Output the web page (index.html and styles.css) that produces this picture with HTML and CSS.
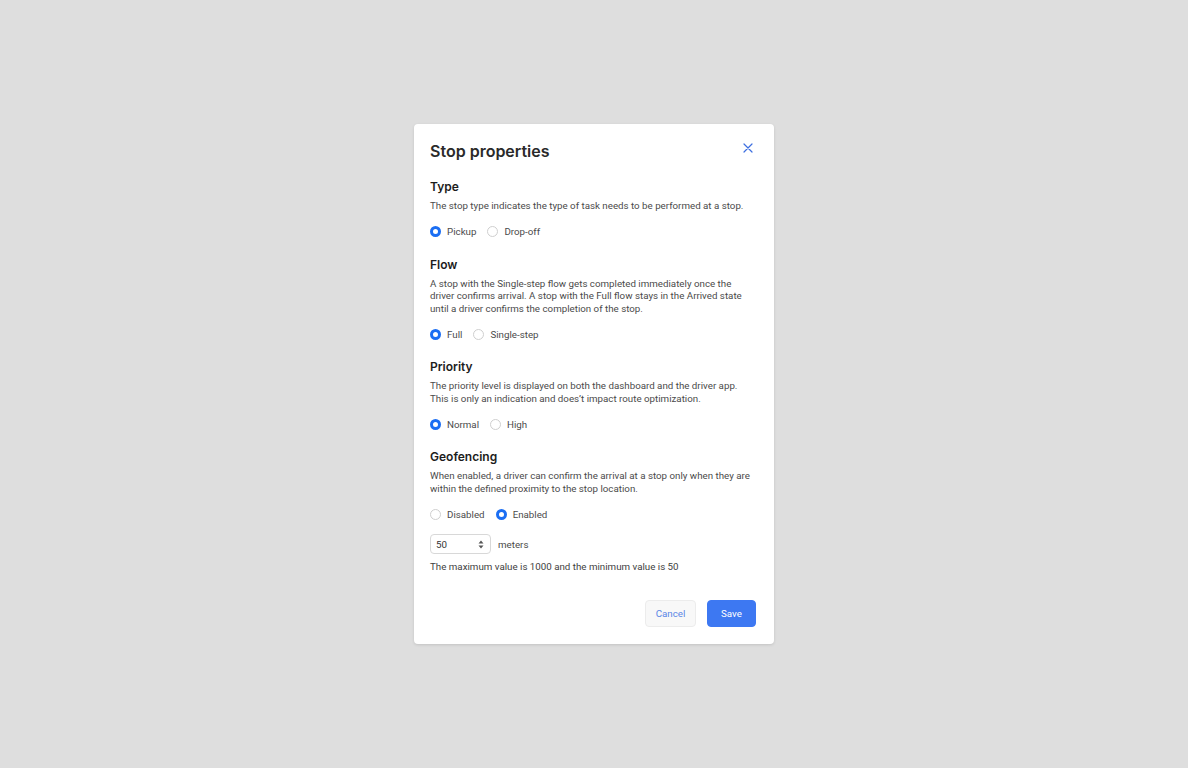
FILE: index.html
```html
<!DOCTYPE html>
<html lang="en">
<head>
<meta charset="utf-8">
<title>Stop properties</title>
<link rel="stylesheet" href="styles.css">
</head>
<body>
<div class="backdrop">
  <div class="dialog">
    <div class="dialog-header">
      <h1 class="dialog-title">Stop properties</h1>
      <button class="close-btn" aria-label="Close">
        <svg width="10" height="10" viewBox="0 0 10 10"><path d="M1 1 L9 9 M9 1 L1 9" stroke="#3d6fe0" stroke-width="1.2" fill="none" stroke-linecap="round"/></svg>
      </button>
    </div>

    <section class="section">
      <h2 class="section-title">Type</h2>
      <p class="section-desc">The stop type indicates the type of task needs to be performed at a stop.</p>
      <div class="radio-row">
        <label class="radio"><span class="dot checked"></span>Pickup</label>
        <label class="radio"><span class="dot"></span>Drop-off</label>
      </div>
    </section>

    <section class="section">
      <h2 class="section-title">Flow</h2>
      <p class="section-desc">A stop with the Single-step flow gets completed immediately once the driver confirms arrival. A stop with the Full flow stays in the Arrived state until a driver confirms the completion of the stop.</p>
      <div class="radio-row">
        <label class="radio"><span class="dot checked"></span>Full</label>
        <label class="radio"><span class="dot"></span>Single-step</label>
      </div>
    </section>

    <section class="section">
      <h2 class="section-title">Priority</h2>
      <p class="section-desc">The priority level is displayed on both the dashboard and the driver app. This is only an indication and does’t impact route optimization.</p>
      <div class="radio-row">
        <label class="radio"><span class="dot checked"></span>Normal</label>
        <label class="radio"><span class="dot"></span>High</label>
      </div>
    </section>

    <section class="section">
      <h2 class="section-title">Geofencing</h2>
      <p class="section-desc">When enabled, a driver can confirm the arrival at a stop only when they are within the defined proximity to the stop location.</p>
      <div class="radio-row">
        <label class="radio"><span class="dot"></span>Disabled</label>
        <label class="radio"><span class="dot checked"></span>Enabled</label>
      </div>
      <div class="distance-row">
        <div class="number-input">
          <span class="number-value">50</span>
          <svg class="spinner" width="6" height="9" viewBox="0 0 6 9"><path d="M3 0.5 L5.5 3.5 L0.5 3.5 Z M3 8.5 L5.5 5.5 L0.5 5.5 Z" fill="#555"/></svg>
        </div>
        <span class="unit">meters</span>
      </div>
      <p class="hint">The maximum value is 1000 and the minimum value is 50</p>
    </section>

    <div class="dialog-footer">
      <button class="btn btn-secondary">Cancel</button>
      <button class="btn btn-primary">Save</button>
    </div>
  </div>
</div>
</body>
</html>
```

FILE: styles.css
```css
* {
  box-sizing: border-box;
}

html, body {
  margin: 0;
  padding: 0;
  height: 100%;
}

body {
  background: #dedede;
  font-family: Roboto, "Liberation Sans", sans-serif;
  color: #2b2b2b;
}

.backdrop {
  display: flex;
  justify-content: center;
  align-items: flex-start;
  padding-top: 124px;
}

.dialog {
  width: 360px;
  background: #ffffff;
  border-radius: 4px;
  box-shadow: 0 1px 3px rgba(0, 0, 0, 0.12);
  padding: 16px 18px 17px 16px;
}

.dialog-header {
  display: flex;
  justify-content: space-between;
  align-items: flex-start;
}

.dialog-title {
  margin: 0;
  font-family: Inter, Roboto, sans-serif;
  font-size: 16px;
  line-height: 22px;
  font-weight: 600;
  color: #2a2a2a;
}

.close-btn {
  border: 0;
  background: none;
  padding: 0;
  margin: 3px 3px 0 0;
  width: 10px;
  height: 10px;
  display: flex;
}

.section {
  margin-top: 17px;
}

.section + .section {
  margin-top: 18px;
}

.section-title {
  margin: 0;
  font-family: Inter, Roboto, sans-serif;
  font-size: 12px;
  line-height: 16px;
  font-weight: 600;
  color: #1c1c1c;
}

.section-desc {
  margin: 5px 0 0;
  font-size: 9.75px;
  line-height: 12.5px;
  color: #4a4a4a;
}

.radio-row {
  display: flex;
  gap: 11px;
  margin-top: 12px;
  height: 14px;
  align-items: center;
}

.radio {
  display: flex;
  align-items: center;
  gap: 6px;
  font-size: 9.75px;
  color: #4a4a4a;
}

.dot {
  width: 11px;
  height: 11px;
  border-radius: 50%;
  border: 1px solid #cfcfcf;
  background: #fff;
  flex: none;
}

.dot.checked {
  border: 3.5px solid #1b6ef3;
  background: #fff;
}

.distance-row {
  display: flex;
  align-items: center;
  gap: 7px;
  margin-top: 13px;
}

.number-input {
  width: 61px;
  height: 20px;
  border: 1px solid #d8d8d8;
  border-radius: 4px;
  display: flex;
  align-items: center;
  justify-content: space-between;
  padding: 0 6px 0 5px;
  font-size: 9.75px;
  color: #333;
}

.unit {
  font-size: 9.75px;
  color: #4a4a4a;
}

.hint {
  margin: 7px 0 0;
  font-size: 9.75px;
  line-height: 12px;
  color: #3e3e3e;
}

.dialog-footer {
  display: flex;
  justify-content: flex-end;
  gap: 11px;
  margin-top: 27px;
}

.btn {
  height: 27px;
  border-radius: 4px;
  font-family: inherit;
  font-size: 9.75px;
  padding: 0;
  cursor: pointer;
}

.btn-secondary {
  width: 51px;
  background: #f8f8f8;
  border: 1px solid #ececec;
  color: #5a86e6;
}

.btn-primary {
  width: 49px;
  background: #3d78f2;
  border: 1px solid #3d78f2;
  color: #ffffff;
}
```
